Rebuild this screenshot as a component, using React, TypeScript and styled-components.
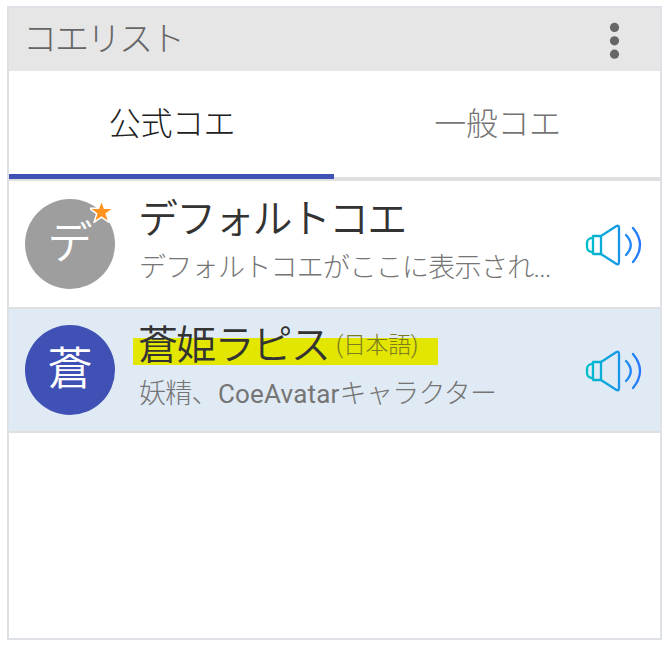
import React from "react";
import styled, { createGlobalStyle } from "styled-components";

const GlobalStyle = createGlobalStyle`
  * { box-sizing: border-box; }
  body {
    margin: 0;
    background: #fff;
    font-family: Roboto, "Noto Sans CJK JP", sans-serif;
    font-weight: 300;
  }
`;

const Panel = styled.main`
  width: 655px;
  height: 634px;
  margin: 6px 0 0 7px;
  border: 2px solid #dee1e6;
  background: #fff;
`;

const Header = styled.header`
  display: flex;
  justify-content: space-between;
  height: 63px;
  padding: 0 38px 0 14px;
  background: #e6e6e6;
  color: #666;
`;

const Title = styled.h1`
  margin: 0;
  font-size: 34px;
  font-weight: 300;
  line-height: 62px;
  letter-spacing: -2px;
  white-space: nowrap;
`;

const MenuButton = styled.button`
  width: 13px;
  height: 63px;
  padding: 0;
  border: 0;
  background: none;
  color: #666;
`;

const Tabs = styled.nav`
  display: grid;
  grid-template-columns: 325px 1fr;
  height: 110px;
  box-shadow: inset 0 -4px #e0e0e0;
`;

const Tab = styled.button<{ $active?: boolean }>`
  height: 108px;
  padding: ${(p) => (p.$active ? "3px 0 0 1px" : "3px 0 0 1px")};
  border: 0;
  border-bottom: 5px solid ${(p) => (p.$active ? "#3f51b5" : "transparent")};
  background: none;
  background-clip: padding-box;
  color: ${(p) => (p.$active ? "#212121" : "#757575")};
  font: 300 32px/100px Roboto, "Noto Sans CJK JP", sans-serif;
  letter-spacing: -0.4px;
  white-space: nowrap;
`;

const Row = styled.article<{ $selected?: boolean }>`
  display: flex;
  align-items: center;
  height: ${(p) => (p.$selected ? 124 : 128)}px;
  padding: 0 17px 0 16px;
  border-bottom: 2px solid #e0e0e0;
  background: ${(p) => (p.$selected ? "#e0eaf4" : "#fff")};
`;

const Avatar = styled.div<{ $color: string }>`
  position: relative;
  flex: none;
  width: 90px;
  height: 90px;
  border-radius: 50%;
  background: ${(p) => p.$color};
  color: #fff;
  font-size: 45px;
  font-weight: 350;
  line-height: 90px;
  text-align: center;
`;

const Badge = styled.svg`
  position: absolute;
  left: 65px;
  top: 2px;
`;

const Details = styled.div`
  flex: 1;
  min-width: 0;
  height: 90px;
  margin-left: 18px;
`;

const NameLine = styled.div<{ $marked?: boolean }>`
  display: flex;
  width: ${(p) => (p.$marked ? "305px" : "auto")};
  height: 40px;
  padding-left: 5px;
  color: #333;
  background: ${(p) =>
    p.$marked
      ? "linear-gradient(#e2e600, #e2e600) 0 100% / 100% 27px no-repeat"
      : "none"};
`;

const Name = styled.span`
  font-size: 40px;
  font-weight: 350;
  line-height: 41px;
  letter-spacing: -1.8px;
  white-space: nowrap;
`;

const Language = styled.small`
  margin-left: 7px;
  color: #7b7b22;
  font-size: 23px;
  line-height: 42px;
  letter-spacing: -0.4px;
  white-space: nowrap;
`;

const Description = styled.p`
  margin: 9px 0 0 6px;
  color: #757575;
  font-size: 27px;
  line-height: 41px;
  letter-spacing: -0.7px;
  white-space: nowrap;
`;

const Latin = styled.span`
  font-size: 26px;
  font-weight: 400;
  letter-spacing: 0.2px;
`;

const Speaker = styled.button`
  flex: none;
  width: 58px;
  height: 44px;
  margin-top: 2px;
  padding: 0;
  border: 0;
  background: none;
  svg { display: block; }
`;

function MoreIcon() {
  return (
    <svg width="13" height="63" viewBox="0 0 13 63" fill="currentColor">
      <circle cx="5.5" cy="19.4" r="4.6" />
      <circle cx="5.5" cy="32.8" r="4.6" />
      <circle cx="5.5" cy="46.2" r="4.6" />
    </svg>
  );
}

function SpeakerIcon({ id }: { id: string }) {
  return (
    <svg width="58" height="44" viewBox="0 0 58 44" fill="none" stroke={`url(#${id})`} strokeWidth="2.3" strokeLinecap="round" strokeLinejoin="round">
      <defs>
        <linearGradient id={id} gradientUnits="userSpaceOnUse" x1="2" y1="0" x2="56" y2="0">
          <stop stopColor="#00bfca" />
          <stop offset="1" stopColor="#2878ff" />
        </linearGradient>
      </defs>
      <path d="M8 15H6.500Q2 16 2 20v4q0 4 4.500 5H8" />
      <path d="M8 13h8v18H8Z" />
      <path d="M16 13 31.500 3Q34 2 34 5v34q0 3-2.500 2L16 31" />
      <path d="M41 12q9.500 10 0 20M48 5q14 17 0 34" />
    </svg>
  );
}

export default function App() {
  return (
    <>
      <GlobalStyle />
      <Panel lang="ja">
        <Header>
          <Title>コエリスト</Title>
          <MenuButton aria-label="メニュー"><MoreIcon /></MenuButton>
        </Header>
        <Tabs>
          <Tab $active>公式コエ</Tab>
          <Tab>一般コエ</Tab>
        </Tabs>
        <Row>
          <Avatar $color="#9e9e9e">
            デ
            <Badge width="24" height="22" viewBox="0 0 24 22">
              <path d="m11.500 1.500 2.400 6.500h7.500l-6 4.500 2.200 7-6.100-4.200-6.100 4.200 2.200-7-6-4.500h7.500Z" fill="#ff931e" stroke="#fff" strokeWidth="3" paintOrder="stroke" />
            </Badge>
          </Avatar>
          <Details>
            <NameLine><Name>デフォルトコエ</Name></NameLine>
            <Description>デフォルトコエがここに表示され...</Description>
          </Details>
          <Speaker aria-label="再生"><SpeakerIcon id="speaker-default" /></Speaker>
        </Row>
        <Row $selected>
          <Avatar $color="#3f51b5">蒼</Avatar>
          <Details>
            <NameLine $marked>
              <Name>蒼姫ラピス</Name>
              <Language>(日本語)</Language>
            </NameLine>
            <Description>妖精、<Latin>CoeAvatar</Latin>キャラクター</Description>
          </Details>
          <Speaker aria-label="再生"><SpeakerIcon id="speaker-lapis" /></Speaker>
        </Row>
      </Panel>
    </>
  );
}
